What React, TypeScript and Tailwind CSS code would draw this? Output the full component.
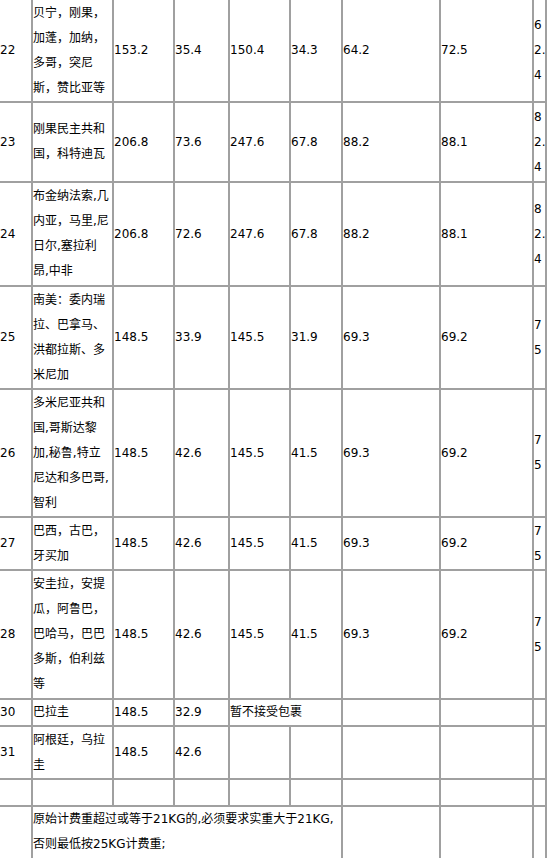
import React from "react";

type Row = {
  id: string;
  h: string;
  country: string[];
  vals: string[];
  last: string[];
};

const rows: Row[] = [
  {
    id: "22",
    h: "h-[103px]",
    country: ["贝宁，刚果，", "加蓬，加纳，", "多哥，突尼", "斯，赞比亚等"],
    vals: ["153.2", "35.4", "150.4", "34.3", "64.2", "72.5"],
    last: ["6", "2.", "4"],
  },
  {
    id: "23",
    h: "h-[80px]",
    country: ["刚果民主共和", "国，科特迪瓦"],
    vals: ["206.8", "73.6", "247.6", "67.8", "88.2", "88.1"],
    last: ["8", "2.", "4"],
  },
  {
    id: "24",
    h: "h-[104px]",
    country: ["布金纳法索,几", "内亚，马里,尼", "日尔,塞拉利", "昂,中非"],
    vals: ["206.8", "72.6", "247.6", "67.8", "88.2", "88.1"],
    last: ["8", "2.", "4"],
  },
  {
    id: "25",
    h: "h-[103px]",
    country: ["南美：委内瑞", "拉、巴拿马、", "洪都拉斯、多", "米尼加"],
    vals: ["148.5", "33.9", "145.5", "31.9", "69.3", "69.2"],
    last: ["7", "5"],
  },
  {
    id: "26",
    h: "h-[128px]",
    country: ["多米尼亚共和", "国,哥斯达黎", "加,秘鲁,特立", "尼达和多巴哥,", "智利"],
    vals: ["148.5", "42.6", "145.5", "41.5", "69.3", "69.2"],
    last: ["7", "5"],
  },
  {
    id: "27",
    h: "h-[53px]",
    country: ["巴西，古巴，", "牙买加"],
    vals: ["148.5", "42.6", "145.5", "41.5", "69.3", "69.2"],
    last: ["7", "5"],
  },
  {
    id: "28",
    h: "h-[129px]",
    country: ["安圭拉，安提", "瓜，阿鲁巴，", "巴哈马，巴巴", "多斯，伯利兹", "等"],
    vals: ["148.5", "42.6", "145.5", "41.5", "69.3", "69.2"],
    last: ["7", "5"],
  },
];

const td = "border border-[#a0a0a0] p-0 align-middle text-left";

function Lines({ lines }: { lines: string[] }) {
  return (
    <>
      {lines.map((l, i) => (
        <React.Fragment key={i}>
          {i > 0 && <br />}
          {l}
        </React.Fragment>
      ))}
    </>
  );
}

export default function App() {
  return (
    <div className="w-[549px] h-[858px] overflow-hidden bg-white">
      <table
        className="table-fixed border-separate border-spacing-0 border-r border-[#a0a0a0] w-[548px] ml-[-1px] mt-[-1px] text-[12px] leading-[25px] text-black whitespace-nowrap"
        style={{ fontFamily: '"DejaVu Sans", "Noto Sans CJK SC", sans-serif' }}
      >
        <colgroup>
          <col className="w-[33px]" />
          <col className="w-[81px]" />
          <col className="w-[61px]" />
          <col className="w-[55px]" />
          <col className="w-[61px]" />
          <col className="w-[52px]" />
          <col className="w-[98px]" />
          <col className="w-[93px]" />
          <col className="w-[13px]" />
        </colgroup>
        <tbody>
          {rows.map((r) => (
            <tr key={r.id} className={r.h}>
              <td className={td}>{r.id}</td>
              <td className={td}>
                <Lines lines={r.country} />
              </td>
              {r.vals.map((v, i) => (
                <td key={i} className={td}>
                  {v}
                </td>
              ))}
              <td className={td}>
                <Lines lines={r.last} />
              </td>
            </tr>
          ))}
          <tr className="h-[27px]">
            <td className={td}>30</td>
            <td className={td}>巴拉圭</td>
            <td className={td}>148.5</td>
            <td className={td}>32.9</td>
            <td className={td} colSpan={2}>
              暂不接受包裹
            </td>
            <td className={td}></td>
            <td className={td}></td>
            <td className={td}></td>
          </tr>
          <tr className="h-[53px]">
            <td className={td}>31</td>
            <td className={td}>
              阿根廷，乌拉
              <br />圭
            </td>
            <td className={td}>148.5</td>
            <td className={td}>42.6</td>
            <td className={td}></td>
            <td className={td}></td>
            <td className={td}></td>
            <td className={td}></td>
            <td className={td}></td>
          </tr>
          <tr className="h-[27px]">
            <td className={td}>&nbsp;</td>
            <td className={td}>&nbsp;</td>
            <td className={td}>&nbsp;</td>
            <td className={td}>&nbsp;</td>
            <td className={td}>&nbsp;</td>
            <td className={td}>&nbsp;</td>
            <td className={td}>&nbsp;</td>
            <td className={td}>&nbsp;</td>
            <td className={td}>&nbsp;</td>
          </tr>
          <tr>
            <td className={td}>&nbsp;</td>
            <td className={td} colSpan={5}>
              原始计费重超过或等于21KG的,必须要求实重大于21KG,
              <br />
              否则最低按25KG计费重;
              <br />
              &nbsp;
            </td>
            <td className={td}>&nbsp;</td>
            <td className={td}>&nbsp;</td>
            <td className={td}>&nbsp;</td>
          </tr>
        </tbody>
      </table>
    </div>
  );
}
